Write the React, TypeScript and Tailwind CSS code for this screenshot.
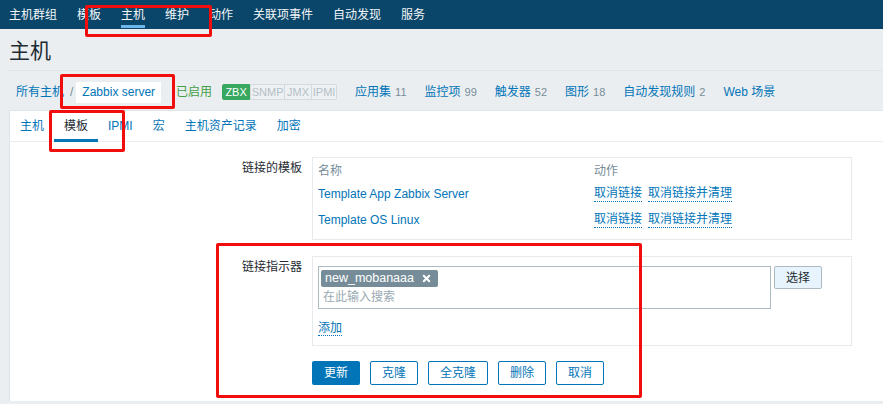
import { X } from "lucide-react";

const FONT = { fontFamily: '"Liberation Sans", Arial, "Noto Sans CJK SC", sans-serif' };

const navItems = ["主机群组", "模板", "主机", "维护", "动作", "关联项事件", "自动发现", "服务"];
const tabs = ["主机", "模板", "IPMI", "宏", "主机资产记录", "加密"];
const hostLinks: [string, string][] = [
  ["应用集", "11"],
  ["监控项", "99"],
  ["触发器", "52"],
  ["图形", "18"],
  ["自动发现规则", "2"],
  ["Web 场景", ""],
];
const templates = ["Template App Zabbix Server", "Template OS Linux"];

function DottedLink({ children }: { children: React.ReactNode }) {
  return (
    <span className="text-[#0275b8] border-b border-dotted border-[#0275b8] leading-[15px]">
      {children}
    </span>
  );
}

function RedBox({ className }: { className: string }) {
  return (
    <div
      className={
        "absolute border-[3px] border-[#f20d0d] rounded-[2px] pointer-events-none " + className
      }
    />
  );
}

export default function App() {
  return (
    <div
      className="relative w-[883px] h-[404px] overflow-hidden bg-[#ebeef0] text-[12px] text-[#1f2c33]"
      style={FONT}
    >
      {/* top menu */}
      <div className="h-[29px] bg-[#0a466a] flex pl-[9px] gap-[20px] text-[#f3f6f8] text-[12px]">
        {navItems.map((n) => (
          <div key={n} className="relative flex items-center">
            {n}
            {n === "主机" && (
              <div className="absolute left-0 right-0 bottom-[1px] h-[3px] bg-[#6cb5e8]" />
            )}
          </div>
        ))}
      </div>

      {/* title */}
      <div className="h-[42px] ml-[9px] flex items-center border-b border-[#dde3e6] text-[21px] leading-none pt-[1px]">
        主机
      </div>

      {/* breadcrumb + host links */}
      <div className="h-[39px] flex items-center pl-[16px] pt-[3px]">
        <span className="text-[#0275b8]">所有主机</span>
        <span className="ml-[6px] mr-[3px] text-[#768d99]">/</span>
        <span className="bg-white h-[21px] px-[6px] flex items-center text-[#0275b8]">
          Zabbix server
        </span>
        <span className="ml-[15px] text-[#429e47]">已启用</span>
        <div className="ml-[10px] flex h-[16px] text-[11px] leading-[14px]">
          <span className="w-[28px] text-center bg-[#38a85f] text-white border border-[#38a85f] rounded-l-[2px]">ZBX</span>
          <span className="w-[35px] text-center border border-[#d3dadf] text-[#b4c0c6] bg-[#eef1f3]">SNMP</span>
          <span className="w-[27px] text-center border border-l-0 border-[#d3dadf] text-[#b4c0c6] bg-[#eef1f3]">JMX</span>
          <span className="w-[25px] text-center border border-l-0 border-[#d3dadf] text-[#b4c0c6] bg-[#eef1f3] rounded-r-[2px]">IPMI</span>
        </div>
        <div className="ml-[18px] flex gap-[18px]">
          {hostLinks.map(([l, c]) => (
            <span key={l} className="text-[#0275b8]">
              {l}
              {c && <span className="ml-[4px] text-[11px] text-[#768d99]">{c}</span>}
            </span>
          ))}
        </div>
      </div>

      {/* content panel */}
      <div className="ml-[9px] h-[291px] bg-white border-l border-t border-[#dfe4e7]">
        <div className="h-[31px] flex border-b border-[#ebeef0]">
          {tabs.map((t) => (
            <div
              key={t}
              className={
                "relative px-[10px] flex items-center " +
                (t === "模板" ? "text-[#1f2c33]" : "text-[#0275b8]")
              }
            >
              {t}
              {t === "模板" && (
                <div className="absolute left-0 right-0 bottom-[-1px] h-[3px] bg-[#0275b8]" />
              )}
            </div>
          ))}
        </div>

        <div className="pt-[15px]">
          {/* linked templates */}
          <div className="flex gap-[10px]">
            <div className="w-[292px] text-right pt-[3px] leading-[16px]">链接的模板</div>
            <div className="w-[540px] border border-[#e6eaec] pt-[3px] pb-[6px] px-[5px]">
              <div className="h-[20px] flex items-center text-[#768d99]">
                <div className="w-[276px]">名称</div>
                <div>动作</div>
              </div>
              {templates.map((t) => (
                <div key={t} className="h-[26px] flex items-center">
                  <div className="w-[276px] text-[#0275b8]">{t}</div>
                  <div className="flex gap-[6px]">
                    <DottedLink>取消链接</DottedLink>
                    <DottedLink>取消链接并清理</DottedLink>
                  </div>
                </div>
              ))}
            </div>
          </div>

          {/* linked indicator */}
          <div className="flex gap-[10px] mt-[16px]">
            <div className="w-[292px] text-right pt-[3px] leading-[16px]">链接指示器</div>
            <div className="w-[540px] border border-[#e6eaec] pt-[9px] pb-[9px] px-[5px]">
              <div className="flex gap-[3px]">
                <div className="w-[453px] h-[43px] border border-[#acbbc2] px-[2px] pt-[2px]">
                  <span className="inline-flex items-center h-[17px] bg-[#768d99] text-white rounded-[2px] pl-[4px] pr-[6px] text-[12.5px]">
                    new_mobanaaa
                    <X size={11} strokeWidth={4.5} className="ml-[7px]" />
                  </span>
                  <div className="text-[#9aa9b1] pl-[2px] pt-[2px] leading-[16px]">在此输入搜索</div>
                </div>
                <div className="h-[23px] w-[48px] border border-[#acbbc2] bg-[#e8f4fd] rounded-[2px] flex items-center justify-center">
                  选择
                </div>
              </div>
              <div className="mt-[11px] leading-[16px]">
                <DottedLink>添加</DottedLink>
              </div>
            </div>
          </div>

          {/* buttons */}
          <div className="flex gap-[10px] mt-[15px] ml-[302px]">
            <div className="h-[24px] w-[48px] bg-[#0275b8] text-white rounded-[2px] flex items-center justify-center">
              更新
            </div>
            {["克隆", "全克隆", "删除", "取消"].map((b) => (
              <div
                key={b}
                className={
                  "h-[24px] border border-[#0275b8] text-[#0275b8] rounded-[2px] flex items-center justify-center " +
                  (b === "全克隆" ? "w-[60px]" : "w-[48px]")
                }
              >
                {b}
              </div>
            ))}
          </div>
        </div>
      </div>

      {/* annotation boxes */}
      <RedBox className="left-[85px] top-[5px] w-[127px] h-[32px]" />
      <RedBox className="left-[60px] top-[74px] w-[115px] h-[35px]" />
      <RedBox className="left-[49px] top-[110px] w-[76px] h-[42px]" />
      <RedBox className="left-[216px] top-[243px] w-[426px] h-[155px]" />
    </div>
  );
}
